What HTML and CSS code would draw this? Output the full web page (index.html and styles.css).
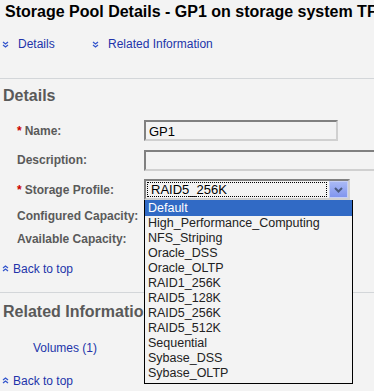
FILE: index.html
```html
<!DOCTYPE html>
<html lang="en">
<head>
  <meta charset="UTF-8" />
  <title>Storage Pool Details</title>
  <link rel="stylesheet" href="styles.css">
</head>
<body>

<h1 class="page-title">Storage Pool Details - GP1 on storage system TF_DS4800</h1>

<div class="jump-links">
  <a href="#details"><svg class="chev" viewBox="0 0 7 7"><path d="M1 1l2.5 2 2.5-2M1 4l2.5 2 2.5-2" /></svg>Details</a>
  <a href="#related"><svg class="chev" viewBox="0 0 7 7"><path d="M1 1l2.5 2 2.5-2M1 4l2.5 2 2.5-2" /></svg>Related Information</a>
</div>

<hr class="divider" />

<h2 class="section-title" id="details">Details</h2>

<div class="form">
  <div class="form-row">
    <label><span class="req">*</span>Name:</label>
    <div class="field"><div class="text-input short">GP1</div></div>
  </div>
  <div class="form-row">
    <label>Description:</label>
    <div class="field"><div class="text-input long"></div></div>
  </div>
  <div class="form-row">
    <label><span class="req">*</span>Storage Profile:</label>
    <div class="field">
      <div class="select">
        <span class="select-value">RAID5_256K</span>
        <span class="select-btn"><svg viewBox="0 0 9 6"><path d="M1 1l3.5 3.5 3.5-3.5" /></svg></span>
      </div>
      <ul class="select-list">
        <li class="active">Default</li>
        <li>High_Performance_Computing</li>
        <li>NFS_Striping</li>
        <li>Oracle_DSS</li>
        <li>Oracle_OLTP</li>
        <li>RAID1_256K</li>
        <li>RAID5_128K</li>
        <li>RAID5_256K</li>
        <li>RAID5_512K</li>
        <li>Sequential</li>
        <li>Sybase_DSS</li>
        <li>Sybase_OLTP</li>
      </ul>
    </div>
  </div>
  <div class="info-row"><label>Configured Capacity:</label></div>
  <div class="info-row"><label>Available Capacity:</label></div>
</div>

<a class="back-top" href="#top"><svg class="chev" viewBox="0 0 7 7"><path d="M1 3l2.5-2 2.5 2M1 6l2.5-2 2.5 2" /></svg>Back to top</a>

<hr class="divider second" />

<h2 class="section-title related" id="related">Related Information</h2>

<a class="volumes" href="#volumes">Volumes (1)</a>

<a class="back-top last" href="#top"><svg class="chev" viewBox="0 0 7 7"><path d="M1 3l2.5-2 2.5 2M1 6l2.5-2 2.5 2" /></svg>Back to top</a>

</body>
</html>
```

FILE: styles.css
```css
body {
  margin: 0;
  background: #f3f3f3;
  font-family: "Liberation Sans", Arial, sans-serif;
  font-size: 12px;
  color: #222;
  overflow: hidden;
}

a {
  color: #2233aa;
  text-decoration: none;
}

.page-title {
  margin: 0;
  padding: 2px 0 0 5px;
  font-size: 16px;
  line-height: 20px;
  white-space: nowrap;
  color: #000;
}

.jump-links {
  display: flex;
  margin-top: 14px;
  height: 16px;
  line-height: 16px;
}
.jump-links a {
  display: flex;
  align-items: center;
}
.jump-links a:first-child {
  width: 90px;
}

.chev {
  width: 7px;
  height: 7px;
  margin: 0 9px 0 2px;
  fill: none;
  stroke: #3355cc;
  stroke-width: 1.3;
}

.divider {
  margin: 26px 0 0;
  border: none;
  border-top: 1px solid #d3d6d9;
  height: 0;
}

.section-title {
  margin: 0;
  padding: 7px 0 0 3px;
  font-size: 16px;
  line-height: 20px;
  color: #595959;
}
.section-title.related {
  padding-top: 9px;
}

.form {
  margin-top: 14px;
}
.form-row {
  display: flex;
  align-items: center;
  height: 21px;
  margin-bottom: 8.5px;
}
.form-row:nth-child(3) {
  margin-bottom: 0;
}
.form-row label,
.info-row label {
  flex-shrink: 0;
  display: inline-block;
  width: 144px;
  padding-left: 17px;
  box-sizing: border-box;
  font-weight: bold;
  color: #5a5a5a;
}
.req {
  color: #cc0000;
  margin-right: 3px;
}
.field {
  position: relative;
  flex: 1;
}

.text-input {
  height: 21px;
  box-sizing: border-box;
  border: 2px solid;
  border-color: #808080 #d0d0d0 #d0d0d0 #808080;
  padding: 2px 0 0 3px;
  font-size: 13px;
  line-height: 15px;
  color: #000;
}
.text-input.short {
  width: 194px;
}
.text-input.long {
  width: 240px;
}

.select {
  display: flex;
  width: 206px;
  height: 21px;
  box-sizing: border-box;
  border: 2px solid;
  border-color: #808080 #d0d0d0 #d0d0d0 #808080;
  font-size: 13px;
  color: #000;
}
.select-value {
  flex: 1;
  margin: 1px 2px 1px 1px;
  padding-left: 3px;
  border: 1px dotted #000;
  line-height: 14px;
}
.select-btn {
  display: flex;
  align-items: center;
  justify-content: center;
  width: 17px;
  background: linear-gradient(#a9b9f5, #8095ee);
  border: 1px solid #c5cff6;
}
.select-btn svg {
  width: 9px;
  height: 6px;
  fill: none;
  stroke: #4a5a80;
  stroke-width: 2;
}

.select-list {
  position: absolute;
  top: 21px;
  left: 0;
  width: 209px;
  margin: 0;
  padding: 0 0 2px;
  list-style: none;
  background: #f3f3f3;
  border: 1px solid #000;
  border-top: none;
  box-sizing: border-box;
  font-size: 12.5px;
  line-height: 15px;
  color: #222;
  z-index: 2;
}
.select-list li {
  padding-left: 3px;
}
.select-list li.active {
  background: #316ac5;
  color: #fff;
  padding-top: 1px;
}

.info-row {
  height: 23px;
  line-height: 23px;
}
.info-row:nth-child(4) {
  margin-top: 5px;
}

.back-top {
  display: flex;
  align-items: center;
  height: 16px;
  margin-top: 9.5px;
}
.back-top .chev {
  margin: 0 4px 0 2px;
}

.divider.second {
  margin-top: 15px;
}

.volumes {
  display: block;
  margin: 18px 0 0 33px;
  line-height: 16px;
}

.back-top.last {
  margin-top: 17px;
}
```
